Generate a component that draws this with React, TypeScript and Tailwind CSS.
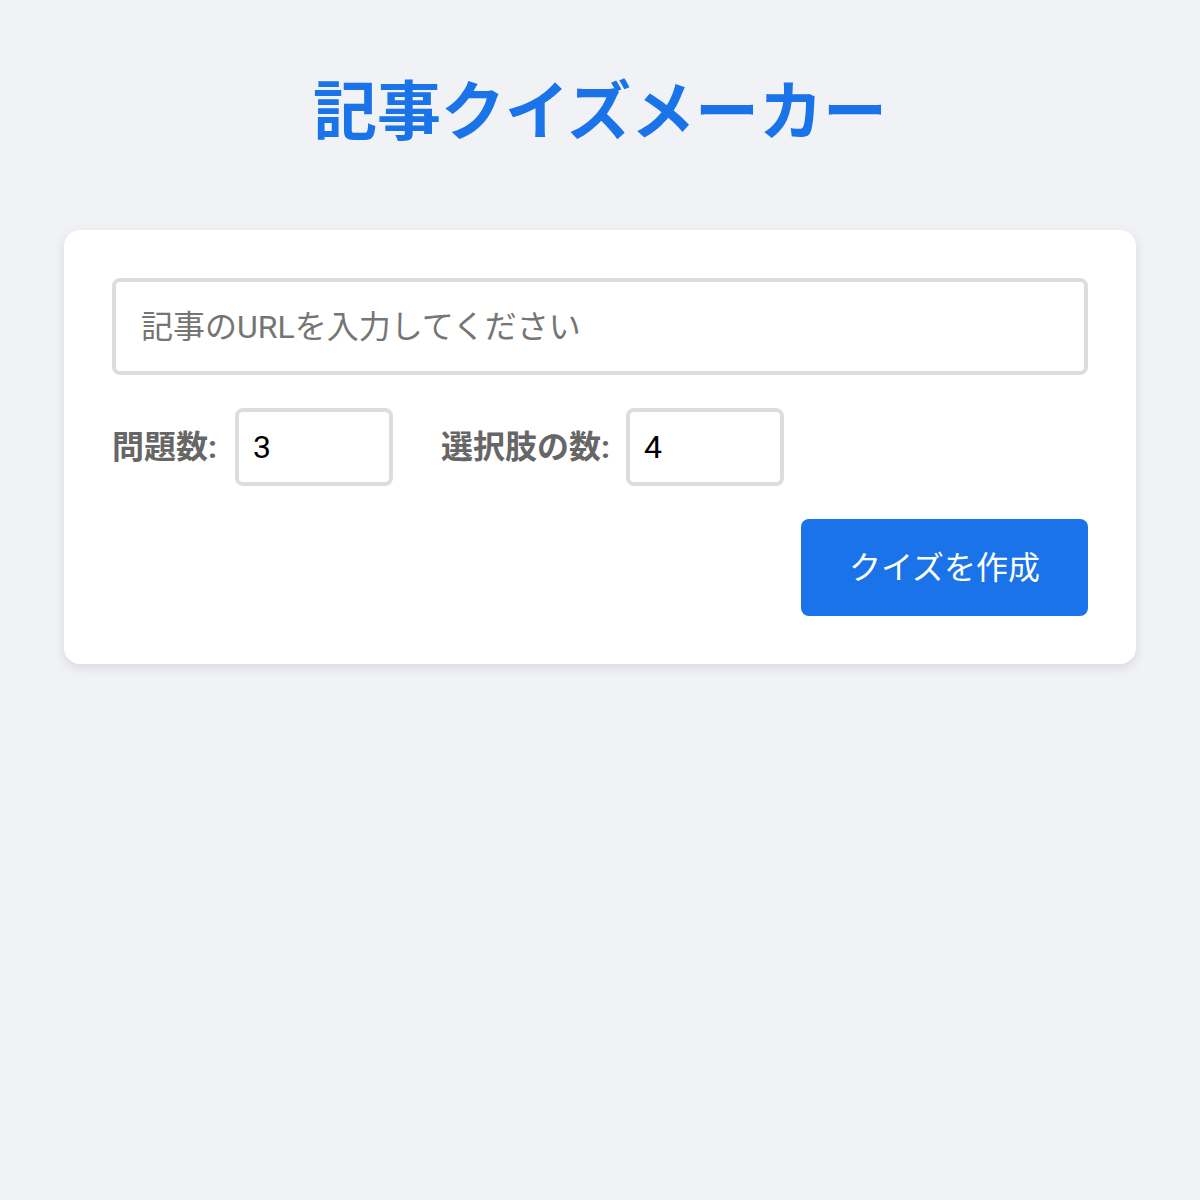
import React from 'react';

const font = { fontFamily: 'Roboto, "Noto Sans CJK JP", sans-serif' };

const App: React.FC = () => {
  return (
    <div className="min-h-[1200px] bg-[#f0f2f5] pt-[81px]" style={font}>
      <h1 className="text-center text-[64px] leading-[64px] font-bold text-[#1a73e8]">
        記事クイズメーカー
      </h1>

      <div className="mx-[64px] mt-[85px] rounded-[16px] bg-white p-[48px] shadow-[0_4px_12px_rgba(0,0,0,0.1)]">
        <input
          type="text"
          placeholder="記事のURLを入力してください"
          className="block h-[97px] w-full rounded-[8px] border-[4px] border-[#dddddd] px-[25px] text-[32px] text-black placeholder:text-[#757575] outline-none"
        />

        <div className="mt-[33px] flex items-center gap-[48px]">
          <div className="flex items-center gap-[18px]">
            <label className="text-[32px] font-bold text-[#666666]">問題数:</label>
            <input
              type="number"
              defaultValue={3}
              className="h-[78px] w-[158px] rounded-[8px] border-[4px] border-[#dddddd] px-[14px] text-[32px] text-black outline-none"
            />
          </div>
          <div className="flex items-center gap-[16px]">
            <label className="text-[32px] font-bold text-[#666666]">選択肢の数:</label>
            <input
              type="number"
              defaultValue={4}
              className="h-[78px] w-[158px] rounded-[8px] border-[4px] border-[#dddddd] px-[14px] text-[32px] text-black outline-none"
            />
          </div>
        </div>

        <div className="mt-[33px] flex justify-end">
          <button className="h-[97px] w-[287px] rounded-[8px] bg-[#1a73e8] text-[32px] text-white">
            クイズを作成
          </button>
        </div>
      </div>
    </div>
  );
};

export default App;
